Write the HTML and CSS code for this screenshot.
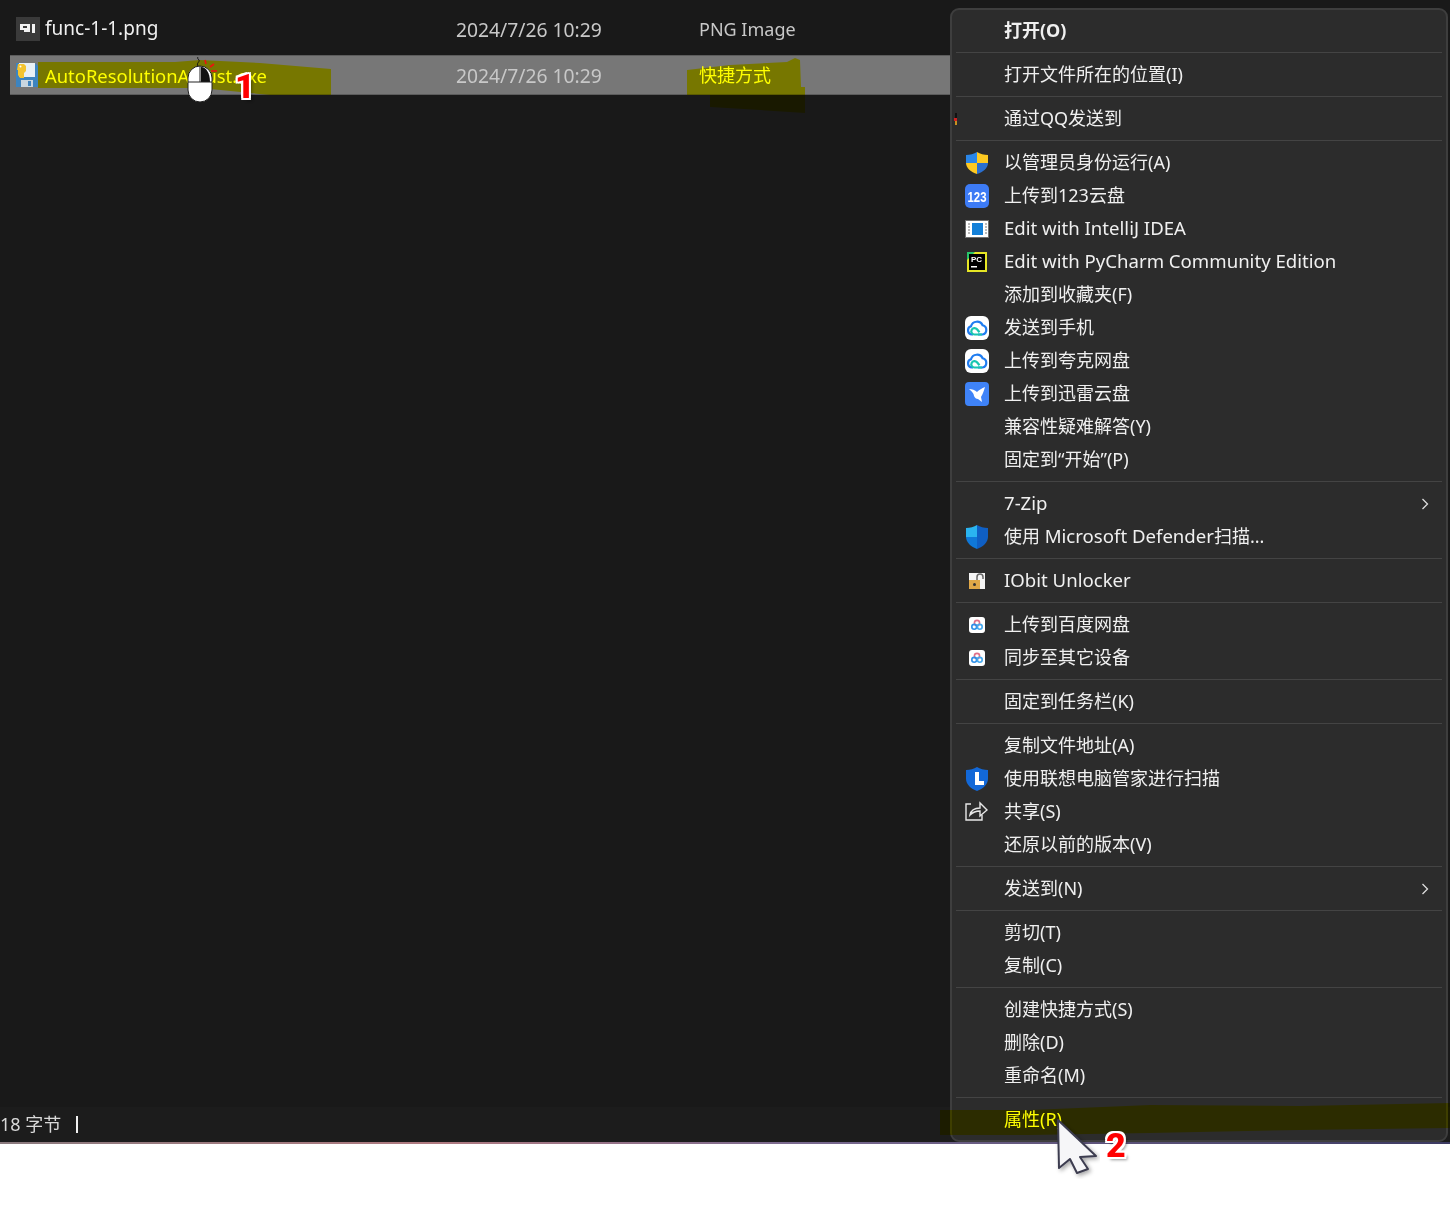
FILE: index.html
```html
<!DOCTYPE html>
<html lang="en">
<head>
    <meta charset="UTF-8">
    <title>Explorer context menu</title>
    <link rel="stylesheet" href="styles.css">
</head>
<body>

<svg class="defs" width="0" height="0">
    <symbol id="cloud-icon" viewBox="0 0 24 24">
        <rect width="24" height="24" rx="6" fill="#fff"/>
        <path d="M8 18.500H7a4.200 4.200 0 0 1-1-8.200 6.200 6.200 0 0 1 11.600-1A4.700 4.700 0 0 1 17.500 18.500H13" fill="none" stroke="#1f7cf0" stroke-width="2.200"/>
        <path d="M17 18.500H9.500a3.200 3.200 0 1 1 2.500-5.200l2.500 3" fill="none" stroke="#19c6b0" stroke-width="2.200"/>
    </symbol>
    <symbol id="baidu-icon" viewBox="0 0 16 16">
        <rect width="16" height="16" rx="3" fill="#fff"/>
        <circle cx="8" cy="6" r="2.600" fill="none" stroke="#e0708a" stroke-width="1.600"/>
        <circle cx="5.200" cy="9.800" r="2.400" fill="none" stroke="#2f8fe8" stroke-width="1.600"/>
        <circle cx="10.800" cy="9.800" r="2.400" fill="none" stroke="#45a8ee" stroke-width="1.600"/>
    </symbol>
</svg>

<div class="explorer">
    <div class="file-list">
        <div class="file-row">
            <div class="file-name">
                <svg class="file-icon" width="24" height="24" viewBox="0 0 24 24">
                    <rect width="24" height="24" fill="#3a3a3a"/>
                    <path d="M4 7h10v8H8v-2H4zM7 9v2h4V9z" fill="#f2f2f2" fill-rule="evenodd"/>
                    <rect x="16" y="7" width="3" height="9" fill="#f2f2f2"/>
                </svg>
                <span class="cell-text">func-1-1.png</span>
            </div>
            <div class="file-date"><span class="cell-text">2024/7/26 10:29</span></div>
            <div class="file-type"><span class="cell-text">PNG Image</span></div>
        </div>
        <div class="file-row selected">
            <div class="file-name">
                <svg class="file-icon shortcut-icon" width="22" height="26" viewBox="0 0 22 26">
                    <path d="M0 1h19l3 3v21H0z" fill="#3d84c0"/>
                    <rect x="3" y="1" width="16" height="14" fill="#e8f0f6"/>
                    <rect x="5" y="18" width="12" height="7" fill="#c9d6e0"/>
                    <rect x="12" y="19" width="3" height="5" fill="#3d84c0"/>
                    <path d="M2 2h6l2 2v5l-2 2v5H4l-2-3V8H1z" fill="#f4c430"/>
                    <circle cx="4.500" cy="4.500" r="1" fill="#fff"/>
                </svg>
                <span class="marked">AutoResolutionAdjust.exe</span>
            </div>
            <div class="file-date">2024/7/26 10:29</div>
            <div class="file-type marked">快捷方式</div>
        </div>
    </div>
    <div class="status-bar">
        <span class="status-text">18 字节</span>
        <span class="status-sep"></span>
    </div>
    <div class="window-edge"></div>
</div>

<div class="context-menu">
    <div class="item bold"><span class="icon"></span><span class="label">打开(O)</span></div>
    <div class="sep"></div>
    <div class="item"><span class="icon"></span><span class="label">打开文件所在的位置(I)</span></div>
    <div class="sep"></div>
    <div class="item">
        <span class="icon"><svg class="qq-speck" width="3" height="12" viewBox="0 0 3 12"><path d="M1 0h2v5H1z" fill="#111"/><path d="M0 5h3v3H0z" fill="#d02020"/><path d="M1 8h2v4H1z" fill="#c89020"/></svg></span>
        <span class="label">通过QQ发送到</span>
    </div>
    <div class="sep"></div>

    <div class="item">
        <span class="icon">
            <svg width="24" height="24" viewBox="0 0 24 24">
                <path d="M12 1C9 3 5 4 1 4v8h11z" fill="#2a86e8"/>
                <path d="M12 1c3 2 7 3 11 3v8H12z" fill="#fdc921"/>
                <path d="M1 12c0 5 5 9 11 11V12z" fill="#fdc921"/>
                <path d="M23 12c0 5-5 9-11 11V12z" fill="#2a6fd0"/>
            </svg>
        </span>
        <span class="label">以管理员身份运行(A)</span>
    </div>
    <div class="item">
        <span class="icon">
            <svg width="24" height="24" viewBox="0 0 24 24">
                <rect width="24" height="24" rx="5" fill="#3d7bf5"/>
                <text x="2.500" y="17.500" textLength="19" lengthAdjust="spacingAndGlyphs" class="icon-text">123</text>
            </svg>
        </span>
        <span class="label">上传到123云盘</span>
    </div>
    <div class="item en">
        <span class="icon">
            <svg width="24" height="18" viewBox="0 0 24 18">
                <rect width="24" height="18" fill="#6e6e6e"/>
                <rect x="1" y="1" width="22" height="16" fill="#fff"/>
                <rect x="7" y="3" width="11" height="12" fill="#1480d8"/>
                <path d="M3 4h2M3 7h2M3 10h2M3 13h2M20 4h2M20 7h2M20 10h2M20 13h2" stroke="#777" stroke-width="1"/>
            </svg>
        </span>
        <span class="label">Edit with IntelliJ IDEA</span>
    </div>
    <div class="item en">
        <span class="icon">
            <svg width="20" height="20" viewBox="0 0 20 20">
                <rect width="20" height="20" fill="#e6e625"/>
                <path d="M0 0h8L0 8z" fill="#27c46a"/>
                <rect x="2" y="2" width="16" height="16" fill="#000"/>
                <text x="4" y="10" class="icon-text-small">PC</text>
                <rect x="4" y="14" width="6" height="1.500" fill="#fff"/>
            </svg>
        </span>
        <span class="label">Edit with PyCharm Community Edition</span>
    </div>
    <div class="item"><span class="icon"></span><span class="label">添加到收藏夹(F)</span></div>
    <div class="item">
        <span class="icon"><svg width="24" height="24"><use href="#cloud-icon"/></svg></span>
        <span class="label">发送到手机</span>
    </div>
    <div class="item">
        <span class="icon"><svg width="24" height="24"><use href="#cloud-icon"/></svg></span>
        <span class="label">上传到夸克网盘</span>
    </div>
    <div class="item">
        <span class="icon">
            <svg width="24" height="24" viewBox="0 0 24 24">
                <rect width="24" height="24" rx="4" fill="#3f83f8"/>
                <path d="M4 7c3 0 6 1 8 3 2-2 5-4 8-5-1 3-2 7-4 10l1 5-4-3c-2 0-3-1-4-3 0-3-3-5-5-7z" fill="#fff"/>
            </svg>
        </span>
        <span class="label">上传到迅雷云盘</span>
    </div>
    <div class="item"><span class="icon"></span><span class="label">兼容性疑难解答(Y)</span></div>
    <div class="item"><span class="icon"></span><span class="label">固定到“开始”(P)</span></div>
    <div class="sep"></div>

    <div class="item en">
        <span class="icon"></span>
        <span class="label">7-Zip</span>
        <svg class="chevron" width="8" height="12" viewBox="0 0 8 12"><path d="M1.500 1l5 5-5 5" fill="none" stroke="#ddd" stroke-width="1.300"/></svg>
    </div>
    <div class="item">
        <span class="icon">
            <svg width="22" height="24" viewBox="0 0 22 24">
                <path d="M11 0c3 2 7 3 11 3v9c0 5-5 10-11 12z" fill="#0f5fc4"/>
                <path d="M11 0C8 2 4 3 0 3v9h11z" fill="#2ab4f0"/>
                <path d="M0 12c0 5 5 10 11 12V12z" fill="#0f78d8"/>
            </svg>
        </span>
        <span class="label">使用 <span class="en-run">Microsoft Defender</span>扫描...</span>
    </div>
    <div class="sep"></div>

    <div class="item en">
        <span class="icon">
            <svg width="16" height="16" viewBox="0 0 16 16">
                <rect width="16" height="16" fill="#f4f4f4"/>
                <rect x="0" y="7" width="11" height="9" fill="#e0a848"/>
                <circle cx="5.500" cy="11.500" r="1.500" fill="#333"/>
                <path d="M8 7V4a3 3 0 0 1 6 0v2" fill="none" stroke="#666" stroke-width="1.500"/>
            </svg>
        </span>
        <span class="label">IObit Unlocker</span>
    </div>
    <div class="sep"></div>

    <div class="item">
        <span class="icon"><svg width="16" height="16"><use href="#baidu-icon"/></svg></span>
        <span class="label">上传到百度网盘</span>
    </div>
    <div class="item">
        <span class="icon"><svg width="16" height="16"><use href="#baidu-icon"/></svg></span>
        <span class="label">同步至其它设备</span>
    </div>
    <div class="sep"></div>

    <div class="item"><span class="icon"></span><span class="label">固定到任务栏(K)</span></div>
    <div class="sep"></div>

    <div class="item"><span class="icon"></span><span class="label">复制文件地址(A)</span></div>
    <div class="item">
        <span class="icon">
            <svg width="22" height="24" viewBox="0 0 22 24">
                <path d="M11 0c3 2 7 3 11 3v9c0 5-5 10-11 12C5 22 0 17 0 12V3c4 0 8-1 11-3z" fill="#1268d8"/>
                <path d="M9 5h4v9h5v4H9z" fill="#fff"/>
            </svg>
        </span>
        <span class="label">使用联想电脑管家进行扫描</span>
    </div>
    <div class="item">
        <span class="icon">
            <svg class="share-icon" width="24" height="20" viewBox="0 0 24 20">
                <path d="M7 3H2v16h16v-5" fill="none" stroke="#e8e8e8" stroke-width="1.400"/>
                <path d="M6 14c1-5 5-7 10-7V2l7 7-7 6v-5c-4 0-7 1-10 4z" fill="none" stroke="#e8e8e8" stroke-width="1.400"/>
            </svg>
        </span>
        <span class="label">共享(S)</span>
    </div>
    <div class="item"><span class="icon"></span><span class="label">还原以前的版本(V)</span></div>
    <div class="sep"></div>

    <div class="item">
        <span class="icon"></span>
        <span class="label">发送到(N)</span>
        <svg class="chevron" width="8" height="12" viewBox="0 0 8 12"><path d="M1.500 1l5 5-5 5" fill="none" stroke="#ddd" stroke-width="1.300"/></svg>
    </div>
    <div class="sep"></div>

    <div class="item"><span class="icon"></span><span class="label">剪切(T)</span></div>
    <div class="item"><span class="icon"></span><span class="label">复制(C)</span></div>
    <div class="sep"></div>

    <div class="item"><span class="icon"></span><span class="label">创建快捷方式(S)</span></div>
    <div class="item"><span class="icon"></span><span class="label">删除(D)</span></div>
    <div class="item"><span class="icon"></span><span class="label">重命名(M)</span></div>
    <div class="sep"></div>

    <div class="item marked"><span class="icon"></span><span class="label">属性(R)</span></div>
</div>

<!-- yellow marker strokes and the tutorial annotations drawn over the screenshot -->
<svg class="marker-layer" width="1450" height="1228" viewBox="0 0 1450 1228">
    <path d="M38 62L175 62L200 60L260 63L331 69L331 95L270 95L200 88L100 88L38 88z" fill="#ff0"/>
    <path d="M687 70L730 65L787 62L795 58L800 60L801 87L805 87L805 113L760 110L710 107L710 95L687 95z" fill="#ff0"/>
    <path d="M940 1110L1030 1110L1150 1105L1300 1106L1450 1103L1450 1128L1300 1130L1150 1133L1030 1135L940 1135z" fill="#ff0"/>
</svg>

<svg class="mouse-mark" width="40" height="52" viewBox="0 0 40 52">
    <path d="M16 10c-2-3 2-4 1-6-1-1-2-2-1-3" fill="none" stroke="#111" stroke-width="1"/>
    <path d="M23 4l1 4M28 11l4-3M29 15h6" stroke="#f01010" stroke-width="1.600"/>
    <rect x="6" y="10" width="24" height="36" rx="12" fill="#fff" stroke="#222" stroke-width="1"/>
    <path d="M19 11c5 0 9 6 9 15h-9z" fill="#111"/>
    <path d="M6 26h24M18 10v16" stroke="#222" stroke-width="1"/>
</svg>
<span class="step-num step-one">1</span>

<svg class="cursor-mark" width="60" height="70" viewBox="0 0 60 70">
    <defs>
        <filter id="cursor-shadow"><feDropShadow dx="2" dy="2" stdDeviation="2" flood-opacity="0.350"/></filter>
    </defs>
    <path d="M3 2L41 38L25 39L33 51L22 55L15 41L4 50z" fill="#f6f6f8" stroke="#3c3c50" stroke-width="2" stroke-linejoin="round" filter="url(#cursor-shadow)"/>
</svg>
<span class="step-num step-two">2</span>

</body>
</html>
```

FILE: styles.css
```css
* {
    box-sizing: border-box;
    margin: 0;
    padding: 0;
}

html, body {
    height: 100%;
    overflow: hidden;
}

body {
    position: relative;
    background: #fff;
    font-family: "Noto Sans", "Noto Sans CJK SC", sans-serif;
    font-size: 18px;
}

.defs {
    position: absolute;
}

/* Explorer window */
.explorer {
    display: flex;
    flex-direction: column;
    height: 1144px;
    background: #191919;
    color: #e6e6e6;
}

.file-list {
    flex: 1;
    display: flex;
    flex-direction: column;
    gap: 6px;
    width: 950px;
    padding: 9px 0 0 10px;
}

.file-row {
    display: grid;
    grid-template-columns: 440px 243px 1fr;
    align-items: center;
    height: 40px;
    padding-left: 6px;
}

.file-row.selected {
    background: #777;
    border-top: 1px solid #5c5c5c;
    border-bottom: 1px solid #5c5c5c;
}

.file-name {
    display: flex;
    align-items: center;
    gap: 5px;
    font-size: 18.400px;
    color: #f0f0f0;
}

.file-name .cell-text {
    font-size: 19px;
}

.cell-text {
    margin-bottom: 2px;
}

.file-icon {
    flex-shrink: 0;
}

.shortcut-icon {
    margin-right: 2px;
}

.file-date {
    font-size: 19.300px;
    color: #c8c8c8;
}

.file-type {
    color: #c8c8c8;
}

.file-row .marked {
    color: #ff0;
}

.file-type.marked {
    margin-bottom: 2px;
}

.status-bar {
    display: flex;
    align-items: center;
    gap: 15px;
    height: 35px;
    background: #1c1c1c;
    color: #d8d8d8;
}

.status-text {
    margin-bottom: 4px;
}

.status-sep {
    width: 2px;
    height: 17px;
    background: #f0f0f0;
}

.window-edge {
    height: 2px;
    background: linear-gradient(90deg, #8a7a7e 0%, #b07a80 30%, #7a6a90 55%, #3c3a62 100%);
}

/* Context menu */
.context-menu {
    position: absolute;
    top: 8px;
    left: 950px;
    width: 498px;
    padding: 4px;
    background: #2c2c2c;
    border: 2px solid #3e3e3e;
    border-radius: 9px;
    color: #f0f0f0;
}

.item {
    display: flex;
    align-items: center;
    height: 33px;
    white-space: nowrap;
}

.item.bold {
    font-weight: 700;
}

.item.marked {
    color: #ff0;
}

.item.en, .en-run {
    font-size: 18.600px;
}

.label {
    margin-bottom: 4px;
}

.item.en .label {
    margin-bottom: 3px;
}

.icon {
    flex-shrink: 0;
    display: flex;
    align-items: center;
    justify-content: center;
    width: 48px;
    padding-right: 6px;
}

.qq-speck {
    margin-left: -2px;
    margin-right: auto;
}

.share-icon {
    margin-left: -3px;
    margin-bottom: 2px;
}

.icon-text {
    font-family: "Liberation Sans", sans-serif;
    font-size: 15px;
    font-weight: 700;
    fill: #fff;
}

.icon-text-small {
    font-family: "Liberation Sans", sans-serif;
    font-size: 8px;
    font-weight: 700;
    fill: #fff;
}

.chevron {
    margin-left: auto;
    margin-right: 13px;
}

.sep {
    height: 1px;
    margin: 5px 0;
    background: #444;
}

/* Overlays on the screenshot */
.marker-layer {
    position: absolute;
    top: 0;
    left: 0;
    mix-blend-mode: multiply;
    pointer-events: none;
}

.mouse-mark {
    position: absolute;
    top: 56px;
    left: 182px;
}

.cursor-mark {
    position: absolute;
    top: 1118px;
    left: 1055px;
}

.step-num {
    position: absolute;
    font-family: Roboto, "Liberation Sans", sans-serif;
    font-size: 34px;
    font-weight: 900;
    line-height: 1;
    color: #f00;
    text-shadow: 2px 0 #fff, -2px 0 #fff, 0 2px #fff, 0 -2px #fff, 2px 2px #fff, -2px 2px #fff, 2px -2px #fff, -2px -2px #fff, 3px 3px 3px rgba(0, 0, 0, 0.4);
}

.step-one {
    top: 69px;
    left: 235px;
}

.step-two {
    top: 1128px;
    left: 1106px;
}
```
